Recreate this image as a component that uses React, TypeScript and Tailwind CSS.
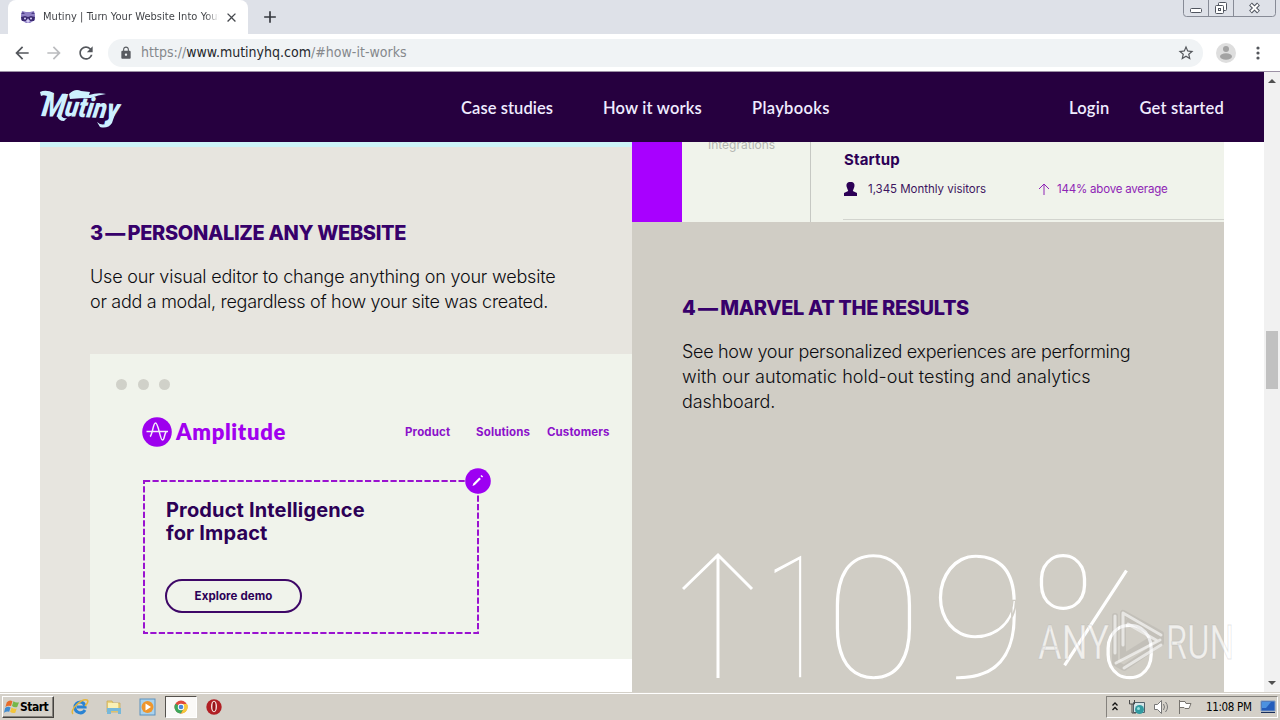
import { MdAdd, MdArrowBack, MdArrowForward, MdClose, MdLock, MdRefresh, MdStarBorder } from 'react-icons/md';

function WindowButtons() {
  return (
    <svg width="94" height="18" viewBox="0 0 94 18" fill="none" className="mr-[3px]">
      <path d="M.5 0V13.5Q.5 16.5 3.5 16.5H89.5Q92.5 16.5 92.5 13.5V0M25.5 0V16M50.5 0V16" stroke="#878b96" />
      <rect x="7.500" y="8.500" width="11" height="4" rx="1" fill="#fff" stroke="#50555f" />
      <rect x="35.500" y="2.500" width="8" height="8" rx="1" fill="#fff" stroke="#50555f" />
      <rect x="32.500" y="5.500" width="8" height="8" rx="1" fill="#fff" stroke="#50555f" />
      <rect x="35.500" y="8.500" width="2" height="2" stroke="#50555f" />
      <path d="M67.500 4l8 8M75.500 4l-8 8" stroke="#50555f" strokeWidth="4" />
      <path d="M68 4.500l7 7M75 4.500l-7 7" stroke="#fff" strokeWidth="2" />
    </svg>
  );
}

function Raccoon() {
  return (
    <svg width="16" height="14" viewBox="0 0 16 14">
      <path d="M1 5L2 1l4 1h4l4-1 1 4v5l-5 3H6l-5-3z" fill="#8f80c4" />
      <path d="M1 4l2-2 2 2zM15 4l-2-2-2 2z" fill="#4c3c87" />
      <path d="M1 7l4-1 3 1 3-1 4 1-1 4-4 0-2-3-2 3-4 0z" fill="#3b2a70" />
      <circle cx="5" cy="8.500" r="1" fill="#ddd6ff" />
      <circle cx="11" cy="8.500" r="1" fill="#ddd6ff" />
      <path d="M6 11l2-2 2 2-2 2z" fill="#d4ccf3" />
    </svg>
  );
}

function TabStrip() {
  return (
    <div className="flex h-[34px] shrink-0 justify-between bg-[#dee1e8]">
      <div className="flex">
        <div className="ml-2 flex w-[240px] items-center rounded-t-lg bg-white pl-3">
          <Raccoon />
          <div className="ml-[7px] w-[176px] overflow-hidden whitespace-nowrap bg-gradient-to-r from-[#3b3d41] from-[92%] to-white bg-clip-text font-['DejaVu_Sans_Condensed','DejaVu_Sans',sans-serif] text-[11px] font-stretch-condensed tracking-[0.050px] text-transparent">
            Mutiny | Turn Your Website Into Your
          </div>
          <MdClose className="ml-[5px] h-[15px] w-[15px] text-[#45484d]" />
        </div>
        <MdAdd className="ml-[12px] mt-[7px] h-[20px] w-[20px] text-[#36393f]" />
      </div>
      <WindowButtons />
    </div>
  );
}

function Toolbar() {
  return (
    <div className="flex h-[38px] shrink-0 items-center border-b border-[#9c91a5] bg-white">
      <MdArrowBack className="ml-[12px] h-[20px] w-[20px] text-[#54575c]" />
      <MdArrowForward className="ml-[12px] h-[20px] w-[20px] text-[#bbbcbf]" />
      <MdRefresh className="ml-[12px] h-[20px] w-[20px] text-[#54575c]" />
      <div className="ml-[12px] flex h-[28px] w-[1095px] items-center rounded-full bg-[#f0f3f5] pl-[11px] pr-[8px]">
        <MdLock className="h-[14px] w-[14px] text-[#595c61]" />
        <div className="ml-[8px] flex-1 font-['DejaVu_Sans_Condensed','DejaVu_Sans',sans-serif] text-[14px] font-light font-stretch-condensed tracking-[0.010px] text-[#85888c]">
          https://<span className="text-[#24272c]">www.mutinyhq.com</span>/#how-it-works
        </div>
        <MdStarBorder className="h-[18px] w-[18px] text-[#54575c]" />
      </div>
      <svg width="20" height="20" viewBox="0 0 20 20" className="ml-[13px]">
        <circle cx="10" cy="10" r="10" fill="#dedede" />
        <circle cx="10" cy="6" r="3" fill="#a3a3a3" />
        <ellipse cx="10" cy="13.500" rx="6" ry="3.200" fill="#a3a3a3" />
      </svg>
      <svg width="4" height="16" viewBox="0 0 4 16" className="ml-[20px]" fill="#54575c">
        <circle cx="2" cy="3" r="1.600" />
        <circle cx="2" cy="8" r="1.600" />
        <circle cx="2" cy="13" r="1.600" />
      </svg>
    </div>
  );
}

function MutinyLogo() {
  return (
    <svg width="80" height="40" viewBox="0 0 80 40" fill="#cdf0ff" className="mt-px overflow-visible">
      <g transform="translate(3 27) rotate(3) skewX(-6)" fontFamily="Roboto, sans-serif" fontWeight="900" fontStyle="italic">
        <text x="-2" y="0" fontSize="33" textLength="23" lengthAdjust="spacingAndGlyphs">M</text>
        <text x="21" y="-1" fontSize="28" textLength="54" lengthAdjust="spacingAndGlyphs">utiny</text>
      </g>
      <path d="M0 3Q6 0 14 4L11 9Q5 5 1 7zM29 5Q35-1 41 2L50 3 49 6Q58 3 66 5 58 6 51 9 40 9 30 10zM20 25q2 5 7 4l-3 3q-6 0-7-6zM57 33q6 5 11 0l3-7 4-1-3 9q-4 6-12 4z" />
    </svg>
  );
}

function SiteHeader() {
  return (
    <header className="flex h-[70px] shrink-0 items-center justify-between bg-[#26003f] px-10 pt-[3px] font-[Lato,sans-serif] text-[16.500px] font-semibold text-[#f0ecff]">
      <div className="w-[421px]"><MutinyLogo /></div>
      <nav className="flex flex-1 whitespace-nowrap">
        <a className="w-[142px] tracking-[0.080px]">Case studies</a>
        <a className="w-[149px] tracking-[0.180px]">How it works</a>
        <a className="tracking-[0.350px]">Playbooks</a>
      </nav>
      <nav className="flex w-[155px] justify-between whitespace-nowrap">
        <a className="tracking-[0.200px]">Login</a>
        <a className="tracking-[0.200px]">Get started</a>
      </nav>
    </header>
  );
}

function AmplitudeMark() {
  return (
    <svg width="30" height="30" viewBox="0 0 30 30" fill="none">
      <circle cx="15" cy="15" r="14.800" fill="#9d00ee" />
      <path d="M4.500 14.500H26M8 19.500C10.500 18 11 6 13.500 6c3 0 4.500 17 7 17 2 0 1.500-5 3.500-8" stroke="#f4eefa" strokeWidth="1.500" />
    </svg>
  );
}

function BrowserMock() {
  return (
    <div className="ml-[50px] mt-[40px] h-[305px] bg-[#f0f3eb] pt-[25px] font-[Inter,sans-serif]">
      <div className="ml-[26px] flex gap-[10.500px]">
        <span className="h-[11px] w-[11px] rounded-full bg-[#d0d1c9]" />
        <span className="h-[11px] w-[11px] rounded-full bg-[#d0d1c9]" />
        <span className="h-[11px] w-[11px] rounded-full bg-[#d0d1c9]" />
      </div>
      <div className="ml-[52px] mt-[27px] flex h-[30px] items-center text-[11.500px] font-bold text-[#8b10ca]">
        <AmplitudeMark />
        <span className="ml-[4px] w-[229px] pb-[2px] font-[Lato,sans-serif] text-[22px] font-extrabold tracking-[0.650px] text-[#a100ef]">Amplitude</span>
        <span className="w-[71px] pt-[2px] tracking-[0.150px]">Product</span>
        <span className="w-[71px] pt-[2px] tracking-[0.150px]">Solutions</span>
        <span className="pt-[2px] tracking-[0.100px]">Customers</span>
      </div>
      <div className="relative ml-[53px] mt-[33px] h-[155px] w-[336px] pl-[23px] pt-[19px]">
        <svg width="350" height="170" viewBox="0 0 350 170" fill="none" className="absolute -top-[13px] left-0">
          <path d="M1 14H335V166H1Z" stroke="#9a12d0" strokeWidth="2" strokeDasharray="6.200 2.300" />
          <circle cx="335" cy="14" r="12.800" fill="#9d00f2" />
          <path d="M329.500 19l.8-2.600 6-6 1.600 1.600-6 6zM337.500 9l1-1 1.600 1.600-1 1z" fill="#fff" />
        </svg>
        <div className="text-[20px] leading-[23px] font-bold tracking-[0.150px] text-[#2c0056]">
          Product Intelligence
          <br />
          for Impact
        </div>
        <div className="-ml-[1px] mt-[34px] flex h-[34px] w-[137px] items-center justify-center rounded-full border-2 border-[#3e0767] pt-[1px] text-[11.500px] font-bold tracking-[0.100px] text-[#2c0056]">
          Explore demo
        </div>
      </div>
    </div>
  );
}

function IntegrationsCard() {
  return (
    <div className="flex h-[80px] overflow-hidden bg-[#f0f3eb] font-[Inter,sans-serif]">
      <div className="w-[50px] bg-[#a800ff]" />
      <div className="w-[129px] border-r border-[#c6c8c3] pl-[26px] text-[12px] leading-[6px] text-[#b4b5b1]">Integrations</div>
      <div className="ml-[32px] flex-1 pt-[9px]">
        <div className="ml-px text-[15px] leading-[18px] font-bold tracking-[0.150px] text-[#2c0056]">Startup</div>
        <div className="mt-[10px] flex h-[20px] items-center whitespace-nowrap text-[11.500px] text-[#3d145e]">
          <svg width="15" height="14" viewBox="0 0 15 14" fill="#2c0056">
            <path d="M7.500 0C4 0 3 2 3.700 5l1.500 4L1 11v3h13v-3L9.800 9l1.500-4C12 2 11 0 7.500 0z" />
          </svg>
          <span className="ml-[10px] w-[170px] pt-[1px] tracking-[-0.030px]">1,345 Monthly visitors</span>
          <svg width="12" height="14" viewBox="0 0 12 14" fill="none" stroke="#8e24b5">
            <path d="M6 13V2M1 7l5-5 5 5" />
          </svg>
          <span className="ml-[7px] pt-[1px] tracking-[-0.200px] text-[#8e24b5]">144% above average</span>
        </div>
        <div className="mt-[20px] h-px bg-[#d2d4ce]" />
      </div>
    </div>
  );
}

interface Line {
  text: string;
  tracking: string;
}

function StepText({ step, title, lines }: { step: string; title: Line; lines: Line[] }) {
  return (
    <div className="pl-[50px] font-[Inter,sans-serif] whitespace-nowrap">
      <h2 className="text-[20px] leading-[24px] font-extrabold text-[#37006b]">
        <span className="tracking-[-1.100px]">{step} — </span>
        <span className={title.tracking}>{title.text}</span>
      </h2>
      <p className="mt-[19px] text-[18px] leading-[25px] font-light text-[#0c0c10]">
        {lines.map((line) => (
          <span key={line.text} className={`block ${line.tracking}`}>{line.text}</span>
        ))}
      </p>
    </div>
  );
}

function ResultFigure() {
  return (
    <div className="mt-[114px] flex h-[180px] items-center pl-[50px] text-white">
      <svg width="72" height="128" viewBox="0 0 72 128" fill="none" stroke="currentColor" strokeWidth="3" className="mb-[4px]">
        <path d="M36 126V3M1 37L36 3 70 37" />
      </svg>
      <div className="mt-[2px] flex font-[Roboto,sans-serif] text-[172px] leading-[180px] font-thin [-webkit-text-stroke:1.4px_#d0cdc5]">
        <span className="ml-[9px] w-[61px] origin-left scale-x-70">1</span>
        <span className="w-[105px] origin-left scale-x-105">0</span>
        <span className="w-[100px] origin-left scale-x-105">9</span>
        <span className="origin-left scale-x-105">%</span>
      </div>
    </div>
  );
}

function ScrollBar() {
  return (
    <div className="flex w-4 flex-col items-center bg-[#f1f1f1]">
      <svg width="16" height="16" viewBox="0 0 16 16"><path d="M4 11l4-4 4 4z" fill="#505050" /></svg>
      <div className="mt-[243px] h-[58px] w-3 bg-[#c1c1c1]" />
      <svg width="16" height="16" viewBox="0 0 16 16" className="mt-auto"><path d="M4 5l4 4 4-4z" fill="#505050" /></svg>
    </div>
  );
}

function Watermark() {
  return (
    <svg width="204" height="72" viewBox="0 0 204 72" className="absolute left-[1034px] top-[604px]">
      <g fontFamily="Roboto, sans-serif" fontSize="48" fill="#fff" fillOpacity=".7" stroke="#999" strokeOpacity=".25" strokeWidth="1">
        <text x="4" y="55" textLength="71" lengthAdjust="spacingAndGlyphs">ANY</text>
        <text x="132" y="55" textLength="68" lengthAdjust="spacingAndGlyphs">RUN</text>
      </g>
      <g fill="none" strokeLinejoin="round" strokeLinecap="round">
        <path d="M81 12V59L90 64 127 39V30L89 9V53L121 33 94 18" stroke="#777" strokeOpacity=".15" strokeWidth="6" />
        <path d="M81 12V49M89 9V41M89 9L127 31M94 20L122 36M82 59L126 36M90 64L127 41" stroke="#fff" strokeOpacity=".6" strokeWidth="3" />
      </g>
    </svg>
  );
}

function StartFlag() {
  return (
    <svg width="16" height="16" viewBox="0 0 17 16" className="shrink-0">
      <path d="M3 3Q6 0 9 2L7.500 7Q4 6 1.500 8z" fill="#e76c2a" />
      <path d="M10 2q3 2 6 1l-2 5q-3 1-5.500-1z" fill="#76b749" />
      <path d="M1.200 9Q4 7 7 8.500L5.500 13Q3 12 0 14z" fill="#3f8bd0" />
      <path d="M8 8.500q3 2 5.500 1L12 14q-3 1-5.500-1z" fill="#f3c53b" />
    </svg>
  );
}

function QuickLaunch() {
  return (
    <div className="flex items-center">
      <svg width="18" height="18" viewBox="0 0 18 18" fill="none" className="ml-[17px]">
        <path d="M14 12c-3 5-10 3-10-3s9-7 10 0H6" stroke="#2a83d3" strokeWidth="3" />
        <path d="M2 16C-2 12 11 0 16 2c2 1 0 4-2 6" stroke="#e6b63b" strokeWidth="1.500" />
      </svg>
      <svg width="18" height="18" viewBox="0 0 18 18" className="ml-[16px]">
        <path d="M2 3h5l1 2h7v9H2z" fill="#ecd27d" stroke="#c5a84e" strokeWidth=".7" />
        <path d="M3 5h10v5H3z" fill="#faf0b5" />
        <path d="M2 16v-6h14v6h-3v-3H6v3z" fill="#76b8da" />
      </svg>
      <svg width="17" height="18" viewBox="0 0 17 18" className="ml-[16px]">
        <rect x="1" y="1" width="15" height="16" fill="#a9d2ed" stroke="#5c91bd" />
        <circle cx="8.500" cy="9" r="6" fill="#ee962d" />
        <path d="M6.500 5.500L12 9l-5.500 3.500z" fill="#fff" />
      </svg>
      <div className="ml-[9px] flex h-[22px] w-[32px] items-center justify-center border border-b-white border-r-white border-l-[#55524d] border-t-[#55524d] bg-[#faf9f7]">
        <svg width="14" height="14" viewBox="0 0 14 14">
          <circle cx="7" cy="7" r="6.500" fill="#e04a3b" />
          <path d="M7 7L1.400 3.700A6.500 6.500 0 0 0 7 13.500L9.500 9z" fill="#3da75a" />
          <path d="M7 4h6a6.500 6.500 0 0 1-6 9.500L10 8z" fill="#f7c83a" />
          <circle cx="7" cy="7" r="3.200" fill="#fff" />
          <circle cx="7" cy="7" r="2.300" fill="#4b87d8" />
        </svg>
      </div>
      <svg width="16" height="16" viewBox="0 0 16 16" className="ml-[9px]">
        <circle cx="8" cy="8" r="7.700" fill="#b11f24" />
        <ellipse cx="8" cy="7.500" rx="3" ry="5.800" fill="#f7e5e1" />
        <ellipse cx="8" cy="7.500" rx="1.600" ry="4.700" fill="#971319" />
      </svg>
    </div>
  );
}

function Tray() {
  return (
    <div className="mr-[2px] flex h-[22px] w-[172px] items-center border border-b-white border-r-white border-l-[#85827d] border-t-[#85827d]">
      <svg width="8" height="12" viewBox="0 0 8 12" fill="none" stroke="#111" strokeWidth="1.300" className="ml-[4px]">
        <path d="M1.500 4.500L4 2l2.500 2.500M1.500 9L4 6.500 6.500 9" />
      </svg>
      <svg width="16" height="16" viewBox="0 0 16 16" className="ml-[10px]">
        <path d="M4.500 3.500h11v10h-11z" fill="#d5e6e9" stroke="#53616a" />
        <path d="M.5 1v4h5V1M3 5v9h4" fill="none" stroke="#4b4b4b" />
        <circle cx="10.500" cy="10.500" r="4.500" fill="#329ba1" />
        <circle cx="9.500" cy="9.500" r="1.500" fill="#9be1df" />
      </svg>
      <svg width="16" height="16" viewBox="0 0 16 16" fill="none" className="ml-[8px]">
        <path d="M1.500 5.500h3l4-4v13l-4-4h-3z" fill="#fff" stroke="#777" />
        <path d="M10.500 5q2 3 0 6M12.500 3q4 5 0 10" stroke="#777" />
      </svg>
      <svg width="16" height="16" viewBox="0 0 16 16" className="ml-[8px]">
        <path d="M2.500 1v14M3 2.500h5l1 2h5l-2 5H8l-1-1H3" fill="#fff" stroke="#77746f" />
      </svg>
      <span className="ml-[13px] w-[46px] whitespace-nowrap pt-[1px] font-['DejaVu_Sans_Condensed','DejaVu_Sans',sans-serif] text-[11.500px] font-stretch-condensed tracking-[-0.350px] text-black">11:08 PM</span>
      <svg width="16" height="14" viewBox="0 0 16 14" className="ml-[8px]">
        <path d="M1 1h14v10H1z" fill="#245cbb" stroke="#809bc0" />
        <path d="M2 2h9l-5 6H2z" fill="#4c91e0" />
        <path d="M1 12h14v1H1z" fill="#182e5b" />
      </svg>
    </div>
  );
}

function Taskbar() {
  return (
    <div className="flex h-[28px] shrink-0 items-center justify-between border-t border-[#d4d0c8] bg-[#d4d0c8] pt-[1px] shadow-[inset_0_1px_0_#fff]">
      <div className="flex items-center">
        <div className="ml-[2px] flex h-[22px] w-[52px] items-center border border-b-[#45433f] border-r-[#45433f] border-l-white border-t-white pl-[1px] shadow-[inset_-1px_-1px_0_#85827d]">
          <StartFlag />
          <span className="font-['DejaVu_Sans_Condensed','DejaVu_Sans',sans-serif] text-[12px] font-bold font-stretch-condensed tracking-[-0.500px] text-black">Start</span>
        </div>
        <QuickLaunch />
      </div>
      <Tray />
    </div>
  );
}

export default function App() {
  return (
    <div className="relative flex h-[720px] w-[1280px] flex-col overflow-hidden bg-white">
      <TabStrip />
      <Toolbar />
      <div className="flex h-[620px] shrink-0">
        <div className="flex w-[1264px] flex-col overflow-hidden">
          <SiteHeader />
          <main className="grid h-[550px] grid-cols-2 overflow-hidden px-10">
            <section className="h-[517px] border-t-[5px] border-[#cdf4f8] bg-[#e7e5df] pt-[74px]">
              <StepText
                step="3"
                title={{ text: 'PERSONALIZE ANY WEBSITE', tracking: 'tracking-[-0.340px]' }}
                lines={[
                  { text: 'Use our visual editor to change anything on your website', tracking: 'tracking-[-0.190px]' },
                  { text: 'or add a modal, regardless of how your site was created.', tracking: 'tracking-[-0.290px]' },
                ]}
              />
              <BrowserMock />
            </section>
            <section className="h-[550px] bg-[#d0cdc5]">
              <IntegrationsCard />
              <div className="pt-[74px]">
                <StepText
                  step="4"
                  title={{ text: 'MARVEL AT THE RESULTS', tracking: 'tracking-[-0.360px]' }}
                  lines={[
                    { text: 'See how your personalized experiences are performing', tracking: 'tracking-[-0.310px]' },
                    { text: 'with our automatic hold-out testing and analytics', tracking: 'tracking-[0.040px]' },
                    { text: 'dashboard.', tracking: 'tracking-[-0.100px]' },
                  ]}
                />
                <ResultFigure />
              </div>
            </section>
          </main>
        </div>
        <ScrollBar />
      </div>
      <Taskbar />
      <Watermark />
    </div>
  );
}
